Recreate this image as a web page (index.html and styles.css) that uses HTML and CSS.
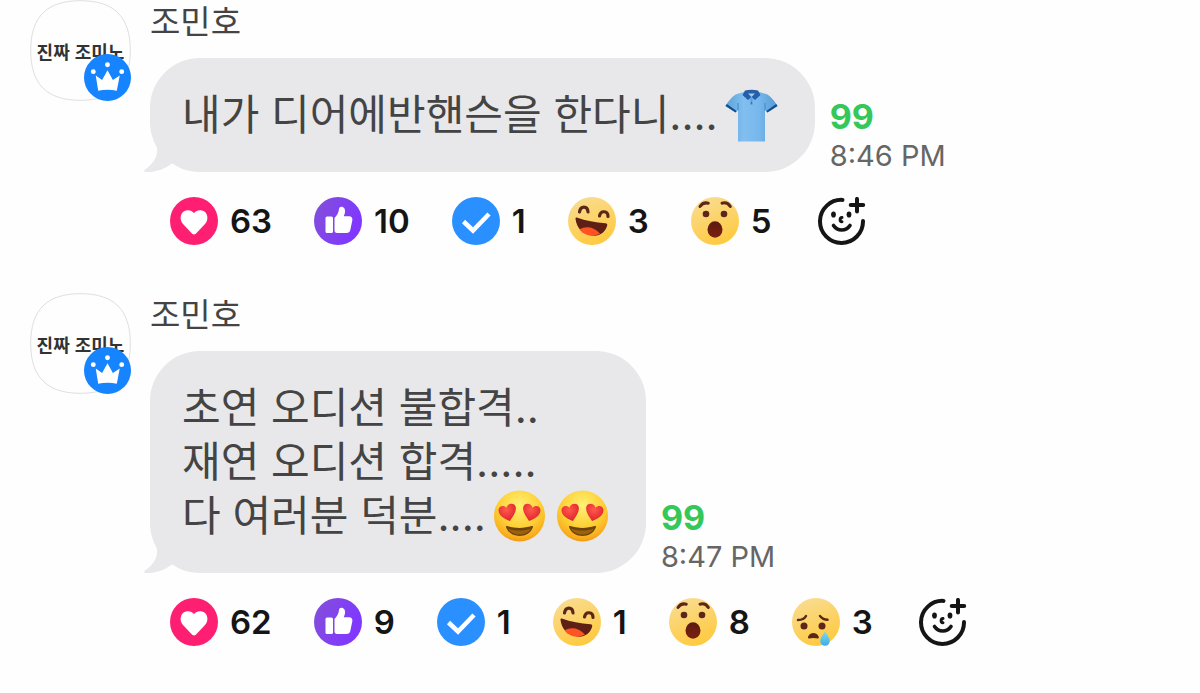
FILE: index.html
```html
<!DOCTYPE html>
<html lang="ko">
<head>
    <meta charset="UTF-8">
    <meta name="viewport" content="width=device-width, initial-scale=1.0">
    <title>조민호</title>
    <link rel="stylesheet" href="styles.css">
</head>
<body>
    <!-- Shared icons -->
    <svg class="sprite" aria-hidden="true">
        <defs>
            <linearGradient id="purple" x1="0" y1="0" x2="1" y2="0.4">
                <stop offset="0" stop-color="#8350d8"/>
                <stop offset="1" stop-color="#8037ff"/>
            </linearGradient>
            <linearGradient id="yellow" x1="0.3" y1="0" x2="0.7" y2="1">
                <stop offset="0" stop-color="#f9dc90"/>
                <stop offset="1" stop-color="#ffc93c"/>
            </linearGradient>
            <linearGradient id="mouth" x1="0" y1="0" x2="0" y2="1">
                <stop offset="0" stop-color="#5c1a10"/>
                <stop offset="1" stop-color="#7c2010"/>
            </linearGradient>
            <linearGradient id="tear" x1="0" y1="0" x2="0" y2="1">
                <stop offset="0" stop-color="#7fd8ee"/>
                <stop offset="1" stop-color="#3aaee8"/>
            </linearGradient>
            <radialGradient id="gold" cx="0.5" cy="0.3" r="0.75">
                <stop offset="0" stop-color="#fff176"/>
                <stop offset="0.55" stop-color="#fdd036"/>
                <stop offset="0.85" stop-color="#f9ab1b"/>
                <stop offset="1" stop-color="#e98a12"/>
            </radialGradient>
            <radialGradient id="red" cx="0.45" cy="0.35" r="0.7">
                <stop offset="0" stop-color="#ff5a4c"/>
                <stop offset="1" stop-color="#df1f2a"/>
            </radialGradient>
            <linearGradient id="cloth" x1="0" y1="0" x2="1" y2="0">
                <stop offset="0" stop-color="#5aa2dc"/>
                <stop offset="0.35" stop-color="#82bff0"/>
                <stop offset="0.65" stop-color="#76b7ec"/>
                <stop offset="1" stop-color="#559bd6"/>
            </linearGradient>
        </defs>

        <symbol id="icon-heart" viewBox="0 0 48 48">
            <circle cx="24" cy="24" r="24" fill="#ff1f72"/>
            <path d="M24 37.500c-1 0-2-1-3-2l-8-8.500c-4-4.500-3-12 3-13.500 3.500-.8 6.300.7 8 2.500 1.700-1.800 4.500-3.300 8-2.500 6 1.500 7 9 3 13.500l-8 8.500c-1 1-2 2-3 2z" fill="#fff"/>
        </symbol>

        <symbol id="icon-like" viewBox="0 0 48 48">
            <circle cx="24" cy="24" r="24" fill="url(#purple)"/>
            <rect x="11.500" y="19.500" width="7.500" height="16.500" rx="1.500" fill="#fff"/>
            <path d="M20.500 21c2.500-2.500 4-5.200 4.500-9 .3-2 1.600-2.600 3-2.200 2.700.7 3.800 3.500 2.800 6.500l-1 3h5.200c2.600 0 3.800 1.800 3.300 4.200l-2 9.500c-.4 2-1.700 3-3.800 3h-9.500c-1.500 0-2.500-1-2.500-2.500z" fill="#fff"/>
        </symbol>

        <symbol id="icon-check" viewBox="0 0 48 48">
            <circle cx="24" cy="24" r="24" fill="#2b90ff"/>
            <path d="M11.500 24.500l9.500 9L37 17" fill="none" stroke="#fff" stroke-width="4.500"/>
        </symbol>

        <symbol id="icon-laugh" viewBox="0 0 48 48">
            <circle cx="24" cy="24" r="24" fill="url(#yellow)"/>
            <path d="M11.500 15c1-6.500 8-6.500 8.500 0M31.500 19c1-6 8.500-5.500 8.500.5" fill="none" stroke="#5c2618" stroke-width="3.200" stroke-linecap="round"/>
            <path d="M8.800 20.500c9 3.300 18.500 5 28.700 5.700 1.500.2 2 1 1.700 2.300-2 7-7.700 11-15.200 10-9.500-1.300-15.500-7.700-16.500-16.700-.1-1 .4-1.600 1.300-1.300z" fill="#5e2014"/>
            <path d="M11.500 32.500c6-3.800 14-3 20.500 4-7.500 4-15.500 2.300-20.500-4z" fill="#ff5324"/>
        </symbol>

        <symbol id="icon-wow" viewBox="0 0 48 48">
            <circle cx="24" cy="24" r="24" fill="url(#yellow)"/>
            <path d="M9 9.500c2-3 5-4.200 8.300-3.300M31 6.200c3.300-.9 6.500.3 8.300 3.300" fill="none" stroke="#5c2618" stroke-width="3" stroke-linecap="round"/>
            <circle cx="15" cy="17" r="3.300" fill="#5c2618"/>
            <circle cx="33" cy="17" r="3.300" fill="#5c2618"/>
            <ellipse cx="24" cy="32.500" rx="7.500" ry="8.300" fill="url(#mouth)"/>
        </symbol>

        <symbol id="icon-sad" viewBox="0 0 48 48">
            <circle cx="24" cy="24" r="24" fill="url(#yellow)"/>
            <path d="M6 22c3.500 0 6.500-1.300 8-4M28 18c2 2.500 4.500 3.800 7.500 3.800" fill="none" stroke="#5c2618" stroke-width="2.500" stroke-linecap="round"/>
            <circle cx="12" cy="28" r="3.500" fill="#5c2618"/>
            <circle cx="30" cy="28" r="3.500" fill="#5c2618"/>
            <path d="M17 40.500c-1.200 0-1.300-1.300-.7-2.200 2.300-4.300 7.900-4.300 10.200 0 .5.900.5 2.200-.7 2.200-2.900-.7-5.900-.7-8.800 0z" fill="#5c2618"/>
            <path d="M33 33.500c2.500 4 4.800 6.500 4.800 9.500a4.800 4.800 0 0 1-9.600 0c0-3 2.300-5.500 4.800-9.500z" fill="url(#tear)"/>
        </symbol>

        <symbol id="icon-add" viewBox="0 0 48 48">
            <g fill="none" stroke="#151515" stroke-width="4" stroke-linecap="round">
                <path d="M24.500 2.900A21.500 21.500 0 1 0 45 24"/>
                <path d="M39 1.900v12.500M32.700 8h12.500"/>
                <path d="M15.500 28.500c4 6 12.500 6 16.500 0" stroke-width="3.600"/>
                <path d="M24 20.500c-2.500.3-2.500 4 0 4.200" stroke-width="3"/>
            </g>
            <ellipse cx="15.500" cy="17.500" rx="2.400" ry="3.100" fill="#151515"/>
            <ellipse cx="31" cy="17.500" rx="2.400" ry="3.100" fill="#151515"/>
        </symbol>

        <symbol id="icon-crown" viewBox="0 0 48 48">
            <circle cx="24" cy="24" r="24" fill="#1683ff"/>
            <path d="M12 22l6.500 4.500L24 16.500l5.500 10L36.500 22l-3 15.500c-6-1.200-13-1.200-19 0z" fill="#fff"/>
            <circle cx="24" cy="11" r="2.500" fill="#fff"/>
            <circle cx="9.500" cy="18" r="2.500" fill="#fff"/>
            <circle cx="38.500" cy="18" r="2.500" fill="#fff"/>
        </symbol>

        <symbol id="emoji-eyes" viewBox="-1 -1 54 54">
            <circle cx="26" cy="26" r="25.500" fill="url(#gold)"/>
            <path d="M16.500 31C11 29 5.500 26 5 20.500c-.3-4.300 5-6.300 8-2.800 1-5 8.500-5.500 9.300-.5.600 4.800-2.800 9.300-5.800 13.800z" fill="url(#red)"/>
            <path d="M35.500 31c5.500-2 11-5 11.500-10.500.3-4.300-5-6.300-8-2.800-1-5-8.500-5.500-9.300-.5-.6 4.800 2.800 9.300 5.800 13.800z" fill="url(#red)"/>
            <path d="M12.500 37c-.3-1 .4-1.300 1.300-.9 7 2.400 17.400 2.400 24.400 0 .9-.4 1.600-.1 1.300.9-3.800 12-23.200 12-27 0z" fill="#6f4308"/>
            <path d="M14.500 38.500c6.500 2.800 16.500 2.800 23 0-4.200 8-18.800 8-23 0z" fill="#986212"/>
        </symbol>

        <symbol id="emoji-shirt" viewBox="0 -1 54 54">
            <path d="M19 3L11 5.500C7 8 3.500 13 1 17l10 6.500 2.500-2.300V52.500h27V21.200l2.500 2.300L53 17c-2.500-4-6-9-10-11.500L35 3z" fill="url(#cloth)"/>
            <path d="M13.500 21.200V14M40.500 21.200V14" stroke="#3f86c4" stroke-width="1"/>
            <path d="M1 17l10 6.500 1.200-1.600L2.300 15zM53 17l-10 6.500-1.200-1.600L51.700 15z" fill="#174c8e"/>
            <path d="M20.500 1.500c4-1 9-1 13 0L36 6l-5.500 5L27 8l-3.500 3L18 6z" fill="#245fa8"/>
            <path d="M23.500 4.500h7L27 8z" fill="#a3cdec"/>
            <path d="M26 8.500h2V16h-2z" fill="#5c9fda"/>
            <circle cx="27" cy="14" r="0.800" fill="#245fa8"/>
        </symbol>

        <symbol id="bubble-tail" viewBox="0 0 36 30">
            <path d="M13 4c1 9-3 16-12 22.500-1.500 1.200-1 2.300 1 2.500 9 .3 18-2.500 26-8.500L36 10z" fill="#e8e8ea"/>
        </symbol>

        <symbol id="avatar-shape" viewBox="0 0 102 102">
            <path d="M51 .7C85 .7 101.300 17 101.300 51S85 101.300 51 101.300.7 85 .7 51 17 .7 51 .7z" fill="#fefefe" stroke="#dedede" stroke-width="1"/>
        </symbol>
    </svg>

    <main class="chat">
        <article class="message">
            <div class="avatar">
                <svg class="avatar-bg" aria-hidden="true"><use href="#avatar-shape"/></svg>
                <span class="avatar-text">진짜 조미노</span>
                <svg class="badge" aria-hidden="true"><use href="#icon-crown"/></svg>
            </div>
            <div class="content">
                <h2 class="name">조민호</h2>
                <div class="bubble-row">
                    <div class="bubble">
                        <svg class="tail" aria-hidden="true"><use href="#bubble-tail"/></svg>
                        <p>내가 디어에반핸슨을 한다니....<svg class="emoji" role="img" aria-label="티셔츠"><use href="#emoji-shirt"/></svg></p>
                    </div>
                    <div class="meta">
                        <span class="unread">99</span>
                        <time>8:46 PM</time>
                    </div>
                </div>
                <div class="reactions">
                    <button type="button"><svg><use href="#icon-heart"/></svg>63</button>
                    <button type="button"><svg><use href="#icon-like"/></svg>10</button>
                    <button type="button"><svg><use href="#icon-check"/></svg>1</button>
                    <button type="button"><svg><use href="#icon-laugh"/></svg>3</button>
                    <button type="button"><svg><use href="#icon-wow"/></svg>5</button>
                    <button type="button" class="add" aria-label="반응 추가"><svg><use href="#icon-add"/></svg></button>
                </div>
            </div>
        </article>

        <article class="message">
            <div class="avatar">
                <svg class="avatar-bg" aria-hidden="true"><use href="#avatar-shape"/></svg>
                <span class="avatar-text">진짜 조미노</span>
                <svg class="badge" aria-hidden="true"><use href="#icon-crown"/></svg>
            </div>
            <div class="content">
                <h2 class="name">조민호</h2>
                <div class="bubble-row">
                    <div class="bubble">
                        <svg class="tail" aria-hidden="true"><use href="#bubble-tail"/></svg>
                        <p>초연 오디션 불합격..<br>재연 오디션 합격.....<br>다 여러분 덕분....<svg class="emoji" role="img" aria-label="하트 눈"><use href="#emoji-eyes"/></svg><svg class="emoji" role="img" aria-label="하트 눈"><use href="#emoji-eyes"/></svg></p>
                    </div>
                    <div class="meta">
                        <span class="unread">99</span>
                        <time>8:47 PM</time>
                    </div>
                </div>
                <div class="reactions">
                    <button type="button"><svg><use href="#icon-heart"/></svg>62</button>
                    <button type="button"><svg><use href="#icon-like"/></svg>9</button>
                    <button type="button"><svg><use href="#icon-check"/></svg>1</button>
                    <button type="button"><svg><use href="#icon-laugh"/></svg>1</button>
                    <button type="button"><svg><use href="#icon-wow"/></svg>8</button>
                    <button type="button"><svg><use href="#icon-sad"/></svg>3</button>
                    <button type="button" class="add" aria-label="반응 추가"><svg><use href="#icon-add"/></svg></button>
                </div>
            </div>
        </article>
    </main>
</body>
</html>
```

FILE: styles.css
```css
* {
    box-sizing: border-box;
}

body {
    margin: 0;
    background-color: #fefefe;
    color: #444;
    font-family: Inter, "Noto Sans CJK KR", sans-serif;
}

.sprite {
    position: absolute;
    width: 0;
    height: 0;
}

.chat {
    display: flex;
    flex-direction: column;
    gap: 48px;
    padding: 0 30px;
}

.message {
    display: flex;
    align-items: flex-start;
    gap: 19px;
}

/* Profile picture */
.avatar {
    position: relative;
    display: flex;
    flex: none;
    align-items: center;
    justify-content: center;
    width: 101px;
    height: 101px;
}

.avatar-bg {
    position: absolute;
    inset: 0;
    width: 100%;
    height: 100%;
}

.avatar-text {
    position: relative;
    font-family: "Noto Sans CJK KR", sans-serif;
    font-size: 18px;
    font-weight: 700;
    line-height: 24px;
    color: #333;
    white-space: nowrap;
}

.badge {
    position: absolute;
    right: 0;
    bottom: 0;
    width: 47px;
    height: 47px;
}

.name {
    margin: 0 0 14px;
    font-size: 33px;
    font-weight: 400;
    line-height: 44px;
}

/* Bubble */
.bubble-row {
    display: flex;
    align-items: flex-end;
    gap: 15px;
}

.bubble {
    position: relative;
    padding: 30px 32px;
    border-radius: 50px;
    background-color: #e8e8ea;
}

.bubble p {
    position: relative;
    margin: 0;
    font-size: 42px;
    line-height: 54px;
}

.tail {
    position: absolute;
    left: -6px;
    bottom: -1px;
    width: 36px;
    height: 30px;
}

.emoji {
    width: 63px;
    height: 54px;
    vertical-align: top;
}

.emoji:first-of-type {
    margin-left: 2px;
}

.meta {
    display: flex;
    flex-direction: column;
    white-space: nowrap;
}

.unread {
    font-size: 34px;
    font-weight: 700;
    line-height: 46px;
    color: #34c759;
}

.meta time {
    font-size: 29px;
    line-height: 32px;
    color: #666;
}

/* Reactions */
.reactions {
    display: flex;
    flex-wrap: wrap;
    gap: 42px;
    margin-top: 25px;
    padding-left: 20px;
}

.reactions button {
    display: flex;
    align-items: center;
    gap: 12px;
    padding: 0;
    border: none;
    background: none;
    color: #151515;
    font-family: inherit;
    font-size: 33px;
    font-weight: 600;
    line-height: 48px;
    cursor: pointer;
}

.reactions svg {
    width: 48px;
    height: 48px;
}

.reactions .add {
    margin-left: 4px;
}
```
